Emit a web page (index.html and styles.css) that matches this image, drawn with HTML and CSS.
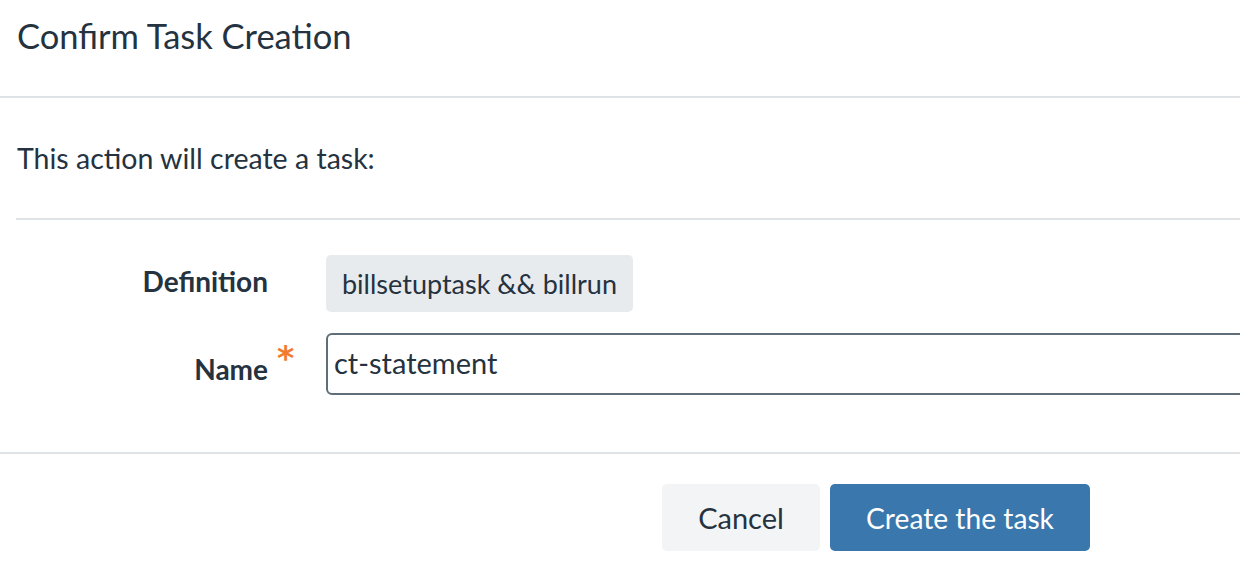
FILE: index.html
```html
<!DOCTYPE html>
<html lang="en">
<head>
<meta charset="utf-8">
<title>Confirm Task Creation</title>
<link rel="stylesheet" href="styles.css">
</head>
<body>
<div class="modal">
  <div class="modal-header">
    <h1 class="modal-title">Confirm Task Creation</h1>
  </div>
  <div class="modal-body">
    <p class="intro">This action will create a task:</p>
    <div class="form">
      <div class="form-row row-def">
        <div class="label">Definition</div>
        <div class="value"><span class="tag">billsetuptask &amp;&amp; billrun</span></div>
      </div>
      <div class="form-row row-name">
        <div class="label label-name">Name<span class="req">*</span></div>
        <div class="value"><input class="input" type="text" value="ct-statement"></div>
      </div>
    </div>
  </div>
  <div class="modal-footer">
    <button class="btn btn-secondary">Cancel</button>
    <button class="btn btn-primary">Create the task</button>
  </div>
</div>
</body>
</html>
```

FILE: styles.css
```css
html, body {
  margin: 0;
  padding: 0;
  background: #ffffff;
}
body {
  font-family: "Lato", "Open Sans", sans-serif;
  color: #253240;
  overflow: hidden;
  width: 1240px;
  height: 578px;
}
.modal {
  width: 1240px;
}
.modal-header {
  height: 98px;
  box-sizing: border-box;
  padding: 14px 0 0 17px;
  border-bottom: 2px solid #dfe3e5;
}
.modal-title {
  margin: 0;
  font-size: 34.5px;
  font-weight: 400;
  line-height: 44px;
}
.modal-body {
  padding: 0 0 0 16px;
}
.intro {
  margin: 0;
  padding: 42px 0 0 1px;
  font-size: 28.5px;
  line-height: 36px;
  height: 78px;
  box-sizing: content-box;
  border-bottom: 2px solid #dfe3e5;
  width: 1300px;
}
.form {
  padding: 35px 0 57px;
}
.form-row {
  display: grid;
  grid-template-columns: 252px 1fr;
  column-gap: 58px;
  align-items: center;
}
.row-def {
  margin-bottom: 21px;
}
.label {
  text-align: right;
  font-size: 28px;
  font-weight: 700;
  position: relative;
}
.row-def .label {
  padding-bottom: 6px;
}
.label-name {
  padding-top: 10px;
}
.req {
  position: absolute;
  left: 261px;
  top: 0;
  color: #f27b2f;
  font-family: "DejaVu Sans", sans-serif;
  font-size: 33px;
  font-weight: 700;
  line-height: 1;
}
.tag {
  display: inline-block;
  background: #e8ebee;
  border-radius: 5px;
  padding: 0 16px;
  height: 57px;
  line-height: 57px;
  font-size: 27px;
}
.input {
  display: block;
  box-sizing: border-box;
  width: 1000px;
  height: 62px;
  border: 2px solid #5f6e78;
  border-radius: 6px;
  padding: 0 6px 4px;
  font-family: inherit;
  font-size: 29px;
  color: #253240;
  background: #ffffff;
  outline: none;
}
.modal-footer {
  border-top: 2px solid #dfe3e5;
  display: flex;
  justify-content: flex-end;
  gap: 10px;
  padding: 30px 150px 0 0;
}
.btn {
  height: 67px;
  border: none;
  border-radius: 5px;
  font-family: inherit;
  padding: 0;
}
.btn-secondary {
  width: 158px;
  background: #f3f4f6;
  color: #253240;
  font-size: 29px;
}
.btn-primary {
  width: 260px;
  background: #3a77ad;
  color: #ffffff;
  font-size: 28.2px;
}
```
